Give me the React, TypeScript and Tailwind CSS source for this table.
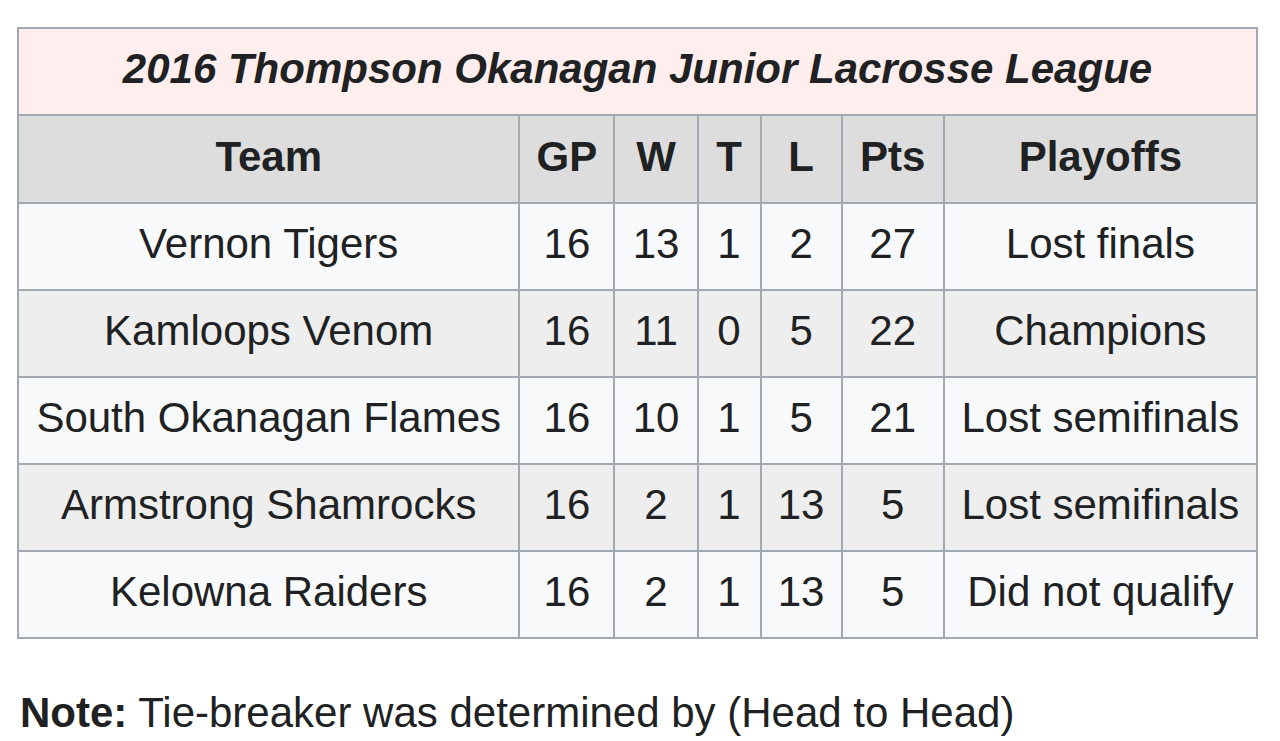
const rows = [
  { team: 'Vernon Tigers', gp: 16, w: 13, t: 1, l: 2, pts: 27, playoffs: 'Lost finals' },
  { team: 'Kamloops Venom', gp: 16, w: 11, t: 0, l: 5, pts: 22, playoffs: 'Champions' },
  { team: 'South Okanagan Flames', gp: 16, w: 10, t: 1, l: 5, pts: 21, playoffs: 'Lost semifinals' },
  { team: 'Armstrong Shamrocks', gp: 16, w: 2, t: 1, l: 13, pts: 5, playoffs: 'Lost semifinals' },
  { team: 'Kelowna Raiders', gp: 16, w: 2, t: 1, l: 13, pts: 5, playoffs: 'Did not qualify' },
]

const headers = ['Team', 'GP', 'W', 'T', 'L', 'Pts', 'Playoffs']

export default function App() {
  return (
    <div className="min-h-[741px] bg-white text-[#202122] font-['Liberation_Sans',Arial,sans-serif] text-[42px]">
      <div className="pl-[17px] pt-[27px]">
        <table className="table-fixed border-collapse border-2 border-[#a2a9b1] w-[1241px]">
          <colgroup>
            <col className="w-[501px]" />
            <col className="w-[95px]" />
            <col className="w-[83px]" />
            <col className="w-[63px]" />
            <col className="w-[81px]" />
            <col className="w-[102px]" />
            <col className="w-[313px]" />
          </colgroup>
          <thead>
            {/* Caption row */}
            <tr className="h-[87px] bg-[#ffeeee]">
              <th colSpan={7} className="border-2 border-[#a2a9b1] italic font-bold leading-none pb-[6px]">
                2016 Thompson Okanagan Junior Lacrosse League
              </th>
            </tr>
            <tr className="h-[88px] bg-[#dddddd]">
              {headers.map((h) => (
                <th key={h} className="border-2 border-[#a2a9b1] font-bold leading-none pb-[5px]">
                  {h}
                </th>
              ))}
            </tr>
          </thead>
          <tbody>
            {rows.map((r, i) => (
              <tr key={r.team} className={i % 2 === 0 ? 'h-[87px] bg-[#f8f9fa]' : 'h-[87px] bg-[#eeeeee]'}>
                <td className="border-2 border-[#a2a9b1] text-center leading-none whitespace-nowrap pb-[6px]">{r.team}</td>
                <td className="border-2 border-[#a2a9b1] text-center leading-none pb-[6px]">{r.gp}</td>
                <td className="border-2 border-[#a2a9b1] text-center leading-none pb-[6px]">{r.w}</td>
                <td className="border-2 border-[#a2a9b1] text-center leading-none pb-[6px]">{r.t}</td>
                <td className="border-2 border-[#a2a9b1] text-center leading-none pb-[6px]">{r.l}</td>
                <td className="border-2 border-[#a2a9b1] text-center leading-none pb-[6px]">{r.pts}</td>
                <td className="border-2 border-[#a2a9b1] text-center leading-none whitespace-nowrap pb-[6px]">{r.playoffs}</td>
              </tr>
            ))}
          </tbody>
        </table>

        {/* Note */}
        <p className="mt-[53px] pl-[3px] leading-none">
          <b>Note:</b> Tie-breaker was determined by (Head to Head)
        </p>
      </div>
    </div>
  )
}
